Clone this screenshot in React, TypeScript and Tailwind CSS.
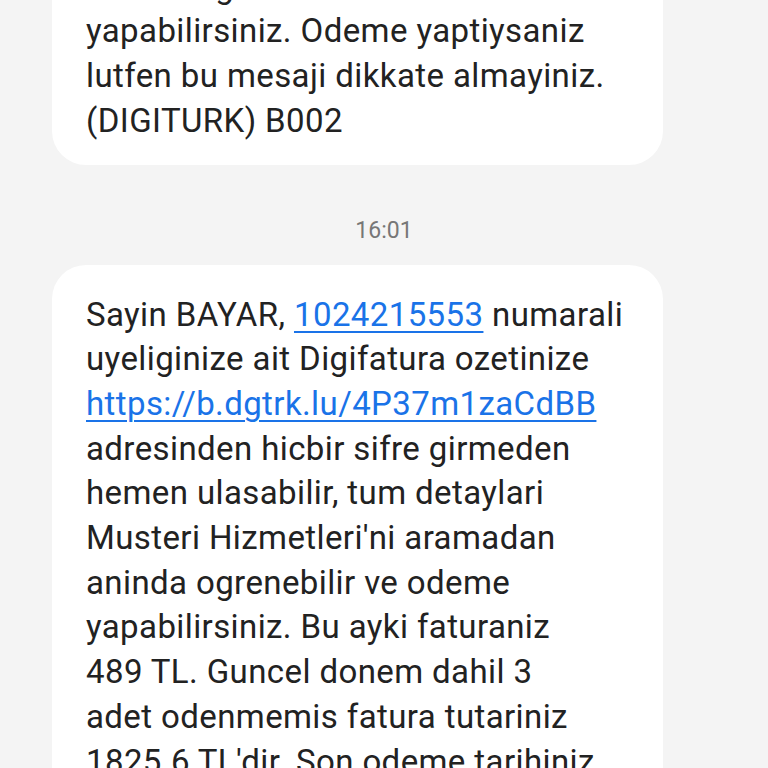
import React from 'react';

const font = { fontFamily: 'Roboto, "Noto Sans", sans-serif' };

function Link({ children }: { children: React.ReactNode }) {
  return <span className="text-[#1a73e8] underline decoration-[2px] underline-offset-[5px]">{children}</span>;
}

function Bubble({ lines, className = '' }: { lines: React.ReactNode[]; className?: string }) {
  return (
    <div className={`ml-[52px] w-[611px] bg-white rounded-[34px] px-[34px] ${className}`}>
      {lines.map((l, i) => (
        <div key={i} className="whitespace-nowrap text-[33px] leading-[44.7px] tracking-[0.4px] text-[#222222]">
          {l}
        </div>
      ))}
    </div>
  );
}

export default function App() {
  return (
    <div className="w-[768px] h-[768px] overflow-hidden bg-[#f4f4f4]" style={font}>
      <div className="-mt-[100px]">
        <Bubble
          className="pt-[20px] pb-[21px]"
          lines={[
            'Musteri Hizmetleri\'ni aramadan',
            'aninda ogrenebilir ve odeme',
            'yapabilirsiniz. Odeme yaptiysaniz',
            'lutfen bu mesaji dikkate almayiniz.',
            '(DIGITURK) B002',
          ]}
        />
        <div className="h-[100px] pt-[52px] text-center text-[23px] leading-[28px] text-[#777777]">16:01</div>
        <Bubble
          className="pt-[28px] pb-[24px]"
          lines={[
            <>Sayin BAYAR, <Link>1024215553</Link> numarali</>,
            'uyeliginize ait Digifatura ozetinize',
            <Link>https://b.dgtrk.lu/4P37m1zaCdBB</Link>,
            'adresinden hicbir sifre girmeden',
            'hemen ulasabilir, tum detaylari',
            'Musteri Hizmetleri\'ni aramadan',
            'aninda ogrenebilir ve odeme',
            'yapabilirsiniz. Bu ayki faturaniz',
            '489 TL. Guncel donem dahil 3',
            'adet odenmemis fatura tutariniz',
            '1825.6 TL\'dir. Son odeme tarihiniz',
            '15.03.2024.',
          ]}
        />
      </div>
    </div>
  );
}
